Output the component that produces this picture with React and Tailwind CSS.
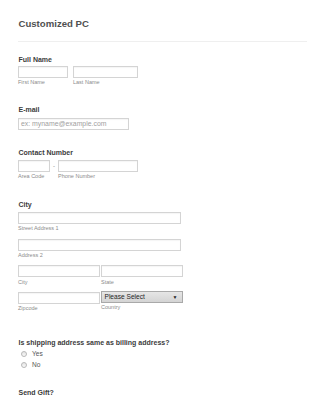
export default function App() {
  const font = { fontFamily: '"Liberation Sans", Arial, Helvetica, sans-serif' };
  const Label = ({ children, className = "" }) => (
    <div className={`text-[7px] leading-[7px] font-bold text-[#3c3c3c] ${className}`}>{children}</div>
  );
  const Sub = ({ children, className = "" }) => (
    <div className={`text-[5.5px] leading-[7px] text-[#8c8c8c] whitespace-nowrap ${className}`}>{children}</div>
  );
  const Box = ({ className = "", children }) => (
    <div className={`h-[12px] border border-[#d4d4d4] bg-white shadow-[inset_0_1px_1px_rgba(0,0,0,0.04)] ${className}`}>{children}</div>
  );
  const Radio = ({ label }) => (
    <div className="flex items-center h-[10.5px]">
      <div className="ml-[3px] w-[6px] h-[6px] rounded-full border border-[#b8b8b8] bg-gradient-to-b from-[#e4e4e4] to-[#fafafa]" />
      <span className="ml-[5px] text-[6.6px] leading-[10.5px] text-[#555]">{label}</span>
    </div>
  );
  return (
    <div style={font} className="w-[325px] h-[400px] bg-white overflow-hidden px-[18px] pt-[19px]">
      <div className="text-[9.6px] leading-[9.5px] font-bold text-[#505050] pl-[0.5px]">Customized PC</div>
      <div className="mt-[12.5px] h-px bg-[#efefef]" />

      <Label className="mt-[14px] pl-[0.5px]">Full Name</Label>
      <div className="mt-[3px] flex">
        <div className="w-[50px]">
          <Box />
          <Sub className="mt-[1px]">First Name</Sub>
        </div>
        <div className="ml-[5px] w-[65px]">
          <Box />
          <Sub className="mt-[1px]">Last Name</Sub>
        </div>
      </div>

      <Label className="mt-[20.4px] pl-[0.5px]">E-mail</Label>
      <Box className="mt-[4.6px] w-[111px] flex items-center pl-[2px]">
        <span className="text-[6.9px] leading-[10px] text-[#a0a0a0]">ex: myname@example.com</span>
      </Box>

      <Label className="mt-[19px] pl-[0.5px]">Contact Number</Label>
      <div className="mt-[4px] flex">
        <div className="w-[32px]">
          <Box />
          <Sub className="mt-[1.5px]">Area Code</Sub>
        </div>
        <div className="w-[8px] flex justify-center">
          <span className="text-[6px] leading-[12px] text-[#777]">-</span>
        </div>
        <div className="w-[80px]">
          <Box />
          <Sub className="mt-[1.5px]">Phone Number</Sub>
        </div>
      </div>

      <Label className="mt-[20.9px] pl-[0.5px]">City</Label>
      <Box className="mt-[3.9px] w-[163px]" />
      <Sub className="mt-[0.9px]">Street Address 1</Sub>
      <Box className="mt-[7.1px] w-[163px]" />
      <Sub className="mt-[1.2px]">Address 2</Sub>

      <div className="mt-[5.8px] flex">
        <div className="w-[81.5px]">
          <Box />
          <Sub className="mt-[1.9px]">City</Sub>
        </div>
        <div className="ml-[1.5px] w-[82px]">
          <Box />
          <Sub className="mt-[1.9px]">State</Sub>
        </div>
      </div>

      <div className="mt-[5.8px] flex">
        <div className="w-[81.5px]">
          <Box />
          <Sub className="mt-[0.8px]">Zipcode</Sub>
        </div>
        <div className="ml-[1.5px] w-[81.5px] -mt-[0.5px]">
          <div className="h-[12px] border border-[#a9a9a9] bg-gradient-to-b from-[#e6e6e6] to-[#d4d4d4] flex items-center justify-between pl-[2.5px] pr-[4px]">
            <span className="text-[6.6px] leading-[10px] text-[#1e1e1e]">Please Select</span>
            <span className="text-[5px] leading-[10px] text-[#222]">▼</span>
          </div>
          <Sub className="mt-[0.6px]">Country</Sub>
        </div>
      </div>

      <Label className="mt-[27.5px] pl-[0.5px]">Is shipping address same as billing address?</Label>
      <div className="mt-[2.9px]">
        <Radio label="Yes" />
        <Radio label="No" />
      </div>

      <Label className="mt-[19.1px] pl-[0.5px]">Send Gift?</Label>
    </div>
  );
}
